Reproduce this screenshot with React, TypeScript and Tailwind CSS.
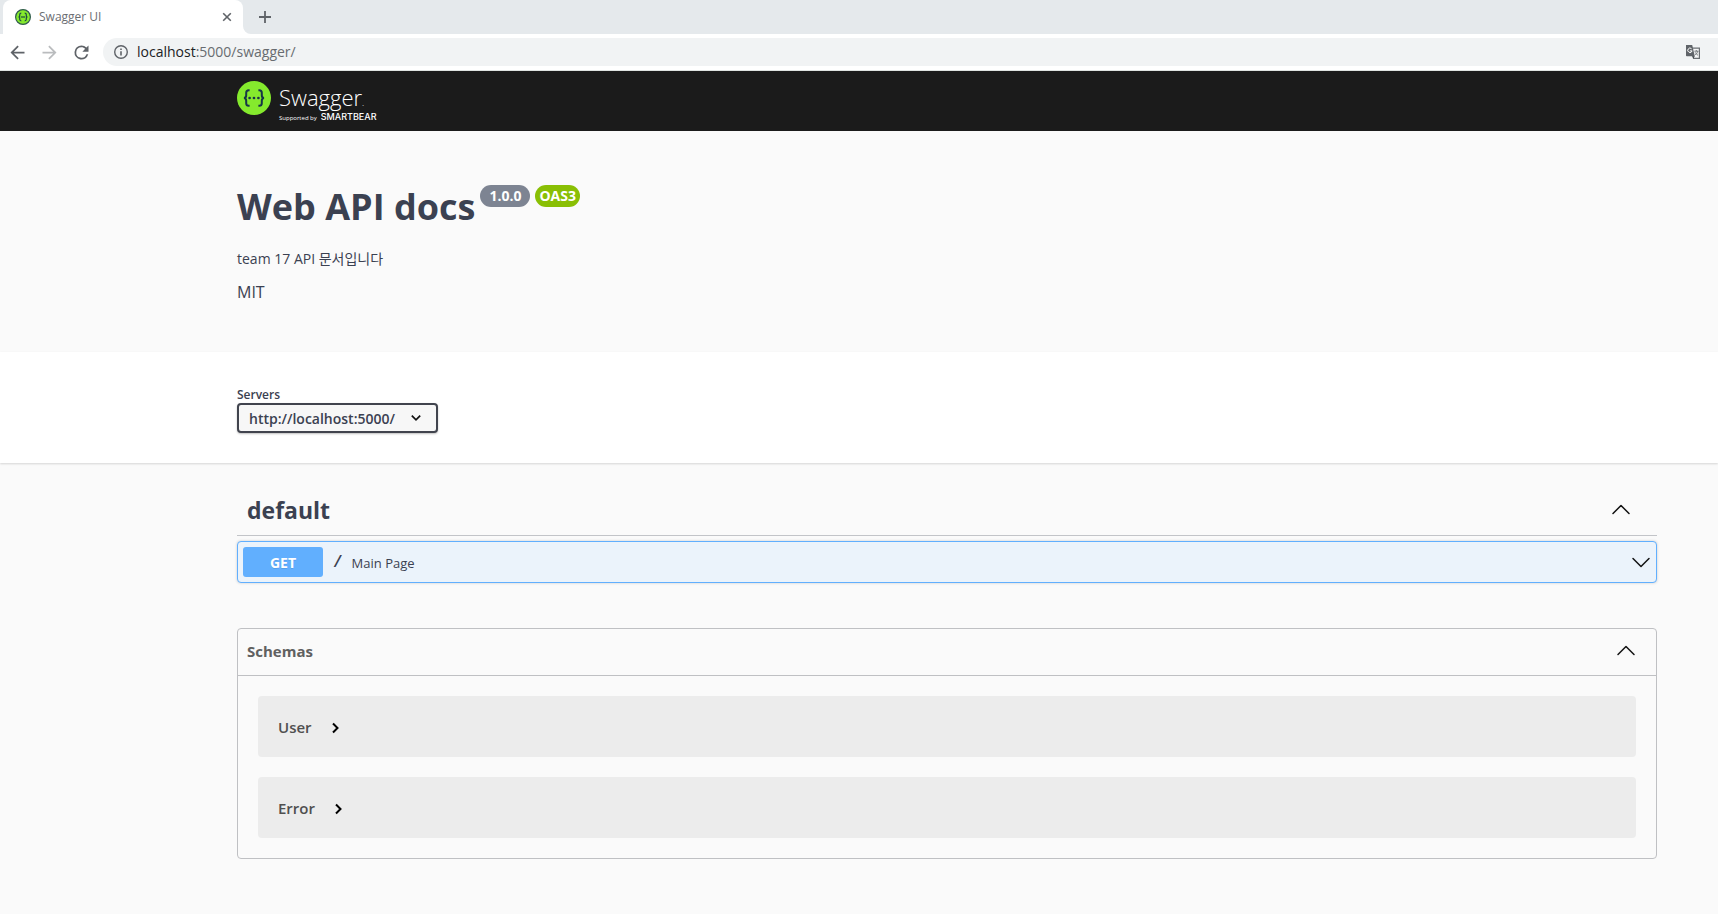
import React from "react";

function Braces({ className, color = "#173647" }: { className: string; color?: string }) {
  return (
    <svg viewBox="0 0 34 34" className={className} aria-hidden="true">
      <circle cx="17" cy="17" r="17" fill="#85ea2d" />
      <g fill="none" stroke={color} strokeWidth="2">
        <path d="M12.6 9.2h-.8c-1.9 0-2.6.9-2.6 2.6v2.4c0 1.800-.6 2.800-2.300 2.800 1.700 0 2.300 1 2.300 2.800v2.400c0 1.700.7 2.600 2.600 2.600h.8" />
        <path d="M21.400 9.200h.8c1.900 0 2.600.9 2.600 2.600v2.400c0 1.800.6 2.800 2.300 2.800-1.700 0-2.300 1-2.300 2.800v2.400c0 1.700-.7 2.600-2.600 2.600h-.8" />
      </g>
      <g fill={color}>
        <circle cx="12.600" cy="17" r="1.350" />
        <circle cx="17" cy="17" r="1.350" />
        <circle cx="21.400" cy="17" r="1.350" />
      </g>
    </svg>
  );
}

function FavIcon() {
  return (
    <svg viewBox="0 0 16 16" className="size-4 shrink-0" aria-hidden="true">
      <circle cx="8" cy="8" r="7.400" fill="#85ea2d" stroke="#2f5a4c" strokeWidth="1.200" />
      <g fill="none" stroke="#1f4a45" strokeWidth="1.200">
        <path d="M6.300 4.200c-1.300 0-1.600.4-1.600 1.500v1c0 .8-.3 1.300-1.200 1.300.9 0 1.200.5 1.200 1.300v1c0 1.100.3 1.500 1.600 1.500" />
        <path d="M9.700 4.200c1.300 0 1.600.4 1.600 1.500v1c0 .8.3 1.300 1.200 1.300-.9 0-1.200.5-1.200 1.300v1c0 1.100-.3 1.500-1.600 1.500" />
        <path d="M5.800 8h4.400" />
      </g>
    </svg>
  );
}

function LargeChevron({ up = false }: { up?: boolean }) {
  return (
    <svg viewBox="0 0 20 20" className="size-5 shrink-0" fill="none" stroke="#111" strokeWidth="1.500" strokeLinecap="round" strokeLinejoin="round" aria-hidden="true">
      <path d={up ? "M2 13.500l8-8 8 8" : "M2 6.500l8 8 8-8"} />
    </svg>
  );
}

function Toolbar() {
  return (
    <div className="flex h-9 items-center bg-white pl-2">
      <button aria-label="Back" className="flex size-[18px] items-center justify-center">
        <svg viewBox="0 0 24 24" className="size-[21px] shrink-0" fill="#5f6368"><path d="M20 11H7.830l5.590-5.590L12 4l-8 8 8 8 1.410-1.410L7.830 13H20z" /></svg>
      </button>
      <button aria-label="Forward" className="ml-[14px] flex size-[18px] items-center justify-center">
        <svg viewBox="0 0 24 24" className="size-[21px] shrink-0" fill="#babcbe"><path d="M12 4l-1.410 1.410L16.170 11H4v2h12.170l-5.580 5.590L12 20l8-8z" /></svg>
      </button>
      <button aria-label="Reload" className="ml-[14px] flex size-[18px] items-center justify-center">
        <svg viewBox="0 0 24 24" className="size-[21px] shrink-0" fill="#5f6368"><path d="M17.650 6.350A7.960 7.960 0 0012 4a8 8 0 107.730 10h-2.080A6 6 0 1112 6c1.660 0 3.140.69 4.220 1.780L13 11h7V4z" /></svg>
      </button>
      <div className="ml-[13px] flex h-7 flex-1 items-center rounded-l-full bg-[#f1f3f4] pr-[17px] pl-2.5">
        <svg viewBox="0 0 16 16" className="size-4 shrink-0" aria-hidden="true">
          <circle cx="8" cy="8" r="6.300" fill="none" stroke="#5f6368" strokeWidth="1.400" />
          <path d="M8 7.200v4.200M8 4.400v1.600" stroke="#5f6368" strokeWidth="1.600" />
        </svg>
        <span className="ml-2 flex-1 text-[14px] leading-5 text-[#686c70]">
          <span className="text-[#202124]">localhost</span>:5000/swagger/
        </span>
        <button aria-label="Translate this page">
          <svg viewBox="0 0 16 16" className="size-4" aria-hidden="true">
            <path d="M7 4.200h7.400v10.200H8.600l-1.200-2.800" fill="#f5f6f7" stroke="#6b6f73" strokeWidth="1.200" />
            <path d="M1 1h6.200l2.600 11.200H1.800a.8.8 0 01-.8-.8z" fill="#5f6368" />
            <path d="M7.600 12.200h2.200l-1.400 2.200z" fill="#3f4347" />
            <path d="M6.600 4.800a2.200 2.200 0 10.500 2.100H4.900" fill="none" stroke="#fff" strokeWidth="1" />
            <path d="M9.300 7.200h4.200M11.300 6v1.200M12.800 7.200c-.4 1.700-1.400 2.900-2.700 3.900M10.200 8.300c.6 1.200 1.500 2.100 2.800 3" fill="none" stroke="#6b6f73" strokeWidth=".9" />
          </svg>
        </button>
      </div>
    </div>
  );
}

function BrowserChrome() {
  return (
    <div className="border-b border-[#dfe3e1]">
      <div className="flex h-[34px] items-start bg-[#e5e9ec] pl-[3px]">
        <div className="flex h-[34px] w-[240px] items-center rounded-t-lg bg-white pr-[11px] pl-3">
          <FavIcon />
          <span className="ml-2 flex-1 text-[12px] leading-4 text-[#6b6e73]">Swagger UI</span>
          <button aria-label="Close tab">
            <svg viewBox="0 0 10 10" className="size-2.5" stroke="#5f6368" strokeWidth="1.600"><path d="M1.200 1.200l7.600 7.600M8.800 1.200L1.200 8.800" /></svg>
          </button>
        </div>
        <svg viewBox="0 0 8 8" className="size-2 self-end" fill="#fff" aria-hidden="true"><path d="M0 0a8 8 0 008 8H0z" /></svg>
        <button aria-label="New tab" className="mt-[11px] ml-2">
          <svg viewBox="0 0 12 12" className="size-3" stroke="#5f6368" strokeWidth="1.800"><path d="M6 0v12M0 6h12" /></svg>
        </button>
      </div>
      <Toolbar />
    </div>
  );
}

function Model({ name }: { name: string }) {
  return (
    <div className="flex h-[61px] items-center rounded bg-[#ececec] px-5">
      <button className="flex items-center gap-5 text-[15px] leading-6 font-semibold text-[#505050]">
        {name}
        <svg viewBox="0 0 8 12" className="mt-0.5 h-3 w-2" fill="none" stroke="#000" strokeWidth="2" aria-hidden="true"><path d="M1 1.500L5.500 6 1 10.500" /></svg>
      </button>
    </div>
  );
}

export default function App() {
  return (
    <div className="min-h-screen bg-[#fafafa] font-['Open_Sans','Noto_Sans_CJK_KR',sans-serif] text-[#3b4151]">
      <BrowserChrome />

      <header className="flex h-[60px] items-start bg-[#1b1b1b] pt-2.5 pr-[61px] pl-[237px]">
        <a href="#" className="flex items-start gap-2 text-white">
          <Braces className="size-[34px]" />
          <span className="flex flex-col gap-1 pt-1">
            <span className="flex items-baseline text-[22px] leading-6 font-light">
              Swagger<span className="text-[9px] leading-3">.</span>
            </span>
            <span className="flex items-baseline gap-1">
              <span className="text-[6px] leading-2">Supported by</span>
              <span className="font-[Inter] text-[9px] leading-2 font-medium">SMARTBEAR</span>
            </span>
          </span>
        </a>
      </header>

      <section className="h-[221px] pt-[50px] pr-[61px] pl-[237px]">
        <div className="flex items-start gap-[5px]">
          <h1 className="text-[36px] leading-[52px] font-bold">Web API docs</h1>
          <span className="mt-1 flex h-[22px] items-center rounded-full bg-[#7d8492] px-[9px] text-[14px] leading-5 font-bold text-white">1.0.0</span>
          <span className="mt-1 flex h-[22px] items-center rounded-full bg-[#89bf04] px-1 text-[14px] leading-5 font-bold text-white">OAS3</span>
        </div>
        <p className="mt-4 text-[14px] leading-5">team 17 API 문서입니다</p>
        <p className="mt-[11px] text-[16px] leading-6">MIT</p>
      </section>

      <section className="h-[111px] bg-white pt-[34px] pr-[61px] pl-[237px] shadow-[0_1px_2px_0_rgba(0,0,0,0.15)]">
        <label htmlFor="servers" className="block text-[12px] leading-[17px] font-semibold">Servers</label>
        <div className="relative w-[201px]">
          <select id="servers" className="block h-[30px] w-full appearance-none rounded border-2 border-[#41444e] bg-[#f7f7f7] pl-2.5 text-[14px] font-semibold shadow-[0_1px_2px_0_rgba(0,0,0,0.25)]">
            <option>http://localhost:5000/</option>
          </select>
          <svg viewBox="0 0 10 6" className="pointer-events-none absolute top-3 right-[17px] h-1.5 w-2.5" fill="none" stroke="#111" strokeWidth="1.700" aria-hidden="true"><path d="M.8.600L5 4.800 9.200.600" /></svg>
        </div>
      </section>

      <main className="pt-6 pr-[61px] pl-[237px]">
        <section>
          <div className="flex h-[49px] items-center justify-between border-b border-[#c2c4c8] pr-[26px] pb-[3px] pl-2.5">
            <h2 className="text-[23px] leading-8 font-bold">default</h2>
            <button aria-label="Collapse default">
              <LargeChevron up />
            </button>
          </div>
          <div className="mt-[5px] flex h-[42px] items-center rounded border border-[#61affe] bg-[#ebf3fb] px-[5px] shadow-[0_0_3px_rgba(0,0,0,0.19)]">
            <button className="flex flex-1 items-center text-left">
              <span className="w-20 rounded-[3px] bg-[#61affe] pt-px text-center text-[14px] leading-[29px] font-bold text-white [text-shadow:0_1px_0_rgba(0,0,0,0.1)]">GET</span>
              <span className="ml-2.5 pt-0.5 font-['Liberation_Mono',monospace] text-[16px] leading-5 font-bold">/</span>
              <span className="ml-[9px] flex-1 pt-0.5 text-[13px] leading-5">Main Page</span>
              <LargeChevron />
            </button>
          </div>
        </section>

        <section className="mt-[45px] rounded border border-[#bfc0c3]">
          <div className="flex h-[47px] items-center justify-between border-b border-[#bfc0c3] pr-5 pb-[3px] pl-[9px]">
            <h2 className="text-[15px] leading-6 font-bold text-[#606060]">Schemas</h2>
            <button aria-label="Collapse schemas">
              <LargeChevron up />
            </button>
          </div>
          <div className="flex flex-col gap-5 p-5">
            <Model name="User" />
            <Model name="Error" />
          </div>
        </section>
      </main>
    </div>
  );
}
